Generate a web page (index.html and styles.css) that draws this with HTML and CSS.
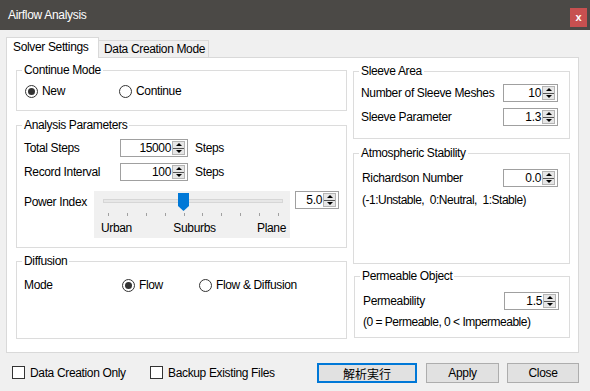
FILE: index.html
```html
<!DOCTYPE html>
<html lang="ja">
<head>
    <meta charset="utf-8">
    <title>Airflow Analysis</title>
    <link rel="stylesheet" href="styles.css">
</head>
<body>
    <div class="titlebar">
        <span class="title">Airflow Analysis</span>
        <span class="close">x</span>
    </div>

    <div class="tabs">
        <div class="tab active">Solver Settings</div>
        <div class="tab">Data Creation Mode</div>
    </div>

    <div class="page">
        <div class="col left">
            <div class="group g-continue">
                <div class="legend">Continue Mode</div>
                <div class="row radios">
                    <label class="radio w-new"><span class="dot on"></span>New</label>
                    <label class="radio"><span class="dot"></span>Continue</label>
                </div>
            </div>

            <div class="group g-analysis">
                <div class="legend">Analysis Parameters</div>
                <div class="row first">
                    <span class="lbl w-96">Total Steps</span>
                    <div class="spin w-68"><span class="val">15000</span><span class="arrows"><i class="up"></i><i class="down"></i></span></div>
                    <span class="unit">Steps</span>
                </div>
                <div class="row next">
                    <span class="lbl w-96">Record Interval</span>
                    <div class="spin w-68"><span class="val">100</span><span class="arrows"><i class="up"></i><i class="down"></i></span></div>
                    <span class="unit">Steps</span>
                </div>
                <div class="row power">
                    <span class="lbl w-70 lbl-power">Power Index</span>
                    <div class="slider">
                        <div class="track"></div>
                        <div class="thumb"></div>
                        <div class="ticks">
                            <i></i><i></i><i></i><i></i><i></i><i></i><i></i><i></i><i></i><i></i>
                        </div>
                        <div class="marks">
                            <span>Urban</span><span>Suburbs</span><span>Plane</span>
                        </div>
                    </div>
                    <div class="spin w-44"><span class="val">5.0</span><span class="arrows"><i class="up"></i><i class="down"></i></span></div>
                </div>
            </div>

            <div class="group g-diffusion">
                <div class="legend">Diffusion</div>
                <div class="row radios mode">
                    <span class="lbl w-98">Mode</span>
                    <label class="radio w-77"><span class="dot on"></span>Flow</label>
                    <label class="radio"><span class="dot"></span>Flow &amp; Diffusion</label>
                </div>
            </div>
        </div>

        <div class="col right">
            <div class="group g-sleeve">
                <div class="legend">Sleeve Area</div>
                <div class="row first-r">
                    <span class="lbl w-142">Number of Sleeve Meshes</span>
                    <div class="spin w-55"><span class="val">10</span><span class="arrows"><i class="up"></i><i class="down"></i></span></div>
                </div>
                <div class="row next">
                    <span class="lbl w-142">Sleeve Parameter</span>
                    <div class="spin w-55"><span class="val">1.3</span><span class="arrows"><i class="up"></i><i class="down"></i></span></div>
                </div>
            </div>

            <div class="group g-atmos">
                <div class="legend">Atmospheric Stability</div>
                <div class="row first-a">
                    <span class="lbl w-141">Richardson Number</span>
                    <div class="spin w-55"><span class="val">0.0</span><span class="arrows"><i class="up"></i><i class="down"></i></span></div>
                </div>
                <div class="note">(-1:Unstable,&nbsp; 0:Neutral,&nbsp; 1:Stable)</div>
            </div>

            <div class="group g-perm">
                <div class="legend">Permeable Object</div>
                <div class="row first-a">
                    <span class="lbl w-141">Permeability</span>
                    <div class="spin w-55"><span class="val">1.5</span><span class="arrows"><i class="up"></i><i class="down"></i></span></div>
                </div>
                <div class="note n-perm">(0 = Permeable, 0 &lt; Impermeable)</div>
            </div>
        </div>
    </div>

    <div class="footer">
        <label class="check w-138"><span class="box"></span>Data Creation Only</label>
        <label class="check"><span class="box"></span>Backup Existing Files</label>
        <button class="btn default">解析実行</button>
        <button class="btn apply">Apply</button>
        <button class="btn close-btn">Close</button>
    </div>
</body>
</html>
```

FILE: styles.css
```css
* {
    box-sizing: border-box;
}

body {
    margin: 0;
    width: 590px;
    height: 391px;
    overflow: hidden;
    background: #f0f0f0;
    font-family: "Liberation Sans", "Noto Sans CJK JP", sans-serif;
    font-size: 12px;
    letter-spacing: -0.35px;
    color: #000;
}

/* title bar */

.titlebar {
    display: flex;
    align-items: flex-start;
    height: 30px;
    background: #4b4946;
    color: #fff;
}

.title {
    margin: 8px 0 0 8px;
    font-size: 12px;
    letter-spacing: -0.3px;
    line-height: 15px;
}

.close {
    margin: 8px 3px 0 auto;
    width: 17px;
    height: 19px;
    background: #c75050;
    color: #fff;
    font-weight: bold;
    font-size: 11px;
    line-height: 18px;
    text-align: center;
}

/* tabs */

.tabs {
    display: flex;
    align-items: flex-end;
    height: 27px;
    padding-left: 6px;
}

.tab {
    height: 17px;
    width: 110px;
    padding-left: 5px;
    line-height: 17px;
    background: #f0f0f0;
    border: 1px solid #d9d9d9;
    border-bottom: 0;
    border-left: 0;
}

.tab.active {
    position: relative;
    z-index: 1;
    width: 93px;
    height: 21px;
    margin-bottom: -1px;
    padding-left: 6px;
    line-height: 19px;
    background: #fff;
    border-left: 1px solid #d9d9d9;
}

.page {
    display: flex;
    gap: 6px;
    margin-left: 6px;
    width: 573px;
    height: 296px;
    padding: 12px 0 0 9px;
    background: #fff;
    border: 1px solid #d9d9d9;
}

.col.left {
    width: 331px;
}

.col.right {
    width: 217px;
}

/* group boxes */

.group {
    border: 1px solid #dcdcdc;
}

.legend {
    display: table;
    margin: -8px 0 0 5px;
    padding: 0 2px;
    background: #fff;
    line-height: 14px;
}

.g-continue { height: 41px; }
.g-analysis { height: 123px; margin-top: 14px; }
.g-diffusion { height: 78px; margin-top: 13px; }
.g-sleeve { height: 68px; margin-top: 1px; }
.g-atmos { height: 111px; margin-top: 14px; }
.g-perm { height: 62px; margin-top: 12px; margin-left: 1px; }

.row {
    display: flex;
    align-items: center;
    height: 18px;
    padding-left: 7px;
}

.radios { margin-top: 7px; padding-left: 8px; height: 14px; }
.mode { margin-top: 10px; padding-left: 7px; }
.first { margin-top: 7px; }
.first-r { margin-top: 6px; padding-left: 7px; }
.first-a { margin-top: 9px; padding-left: 8px; }
.next { margin-top: 6px; }
.g-sleeve .next { padding-left: 7px; }

.lbl { flex: none; }
.w-96 { width: 96px; }
.w-70 { width: 70px; }
.w-98 { width: 98px; }
.w-142 { width: 142px; }
.w-141 { width: 141px; }

.unit { margin-left: 7px; }

/* radios and checks */

.radio, .check {
    display: flex;
    align-items: center;
    gap: 4px;
    flex: none;
}

.w-new { width: 94px; }
.w-77 { width: 77px; }

.dot {
    width: 13px;
    height: 13px;
    border: 1px solid #333;
    border-radius: 50%;
    background: #fff;
    display: flex;
    align-items: center;
    justify-content: center;
}

.dot.on::after {
    content: "";
    width: 7px;
    height: 7px;
    border-radius: 50%;
    background: #333;
}

/* spin boxes */

.spin {
    display: flex;
    align-items: center;
    height: 18px;
    border: 1px solid #a0a0a0;
    background: #fff;
    flex: none;
}

.w-68 { width: 68px; }
.w-55 { width: 55px; }
.w-44 { width: 44px; }

.val {
    flex: 1;
    text-align: right;
    padding-right: 1px;
    line-height: 14px;
}

.arrows {
    display: flex;
    flex-direction: column;
    width: 13px;
    height: 14px;
    margin-right: 2px;
    border: 1px solid #b4b4b4;
    background: #e6e6e6;
}

.arrows i {
    flex: 1;
    display: flex;
    align-items: center;
    justify-content: center;
}

.arrows .down {
    border-top: 1px solid #555;
}

.arrows .up::after {
    content: "";
    border-left: 3px solid transparent;
    border-right: 3px solid transparent;
    border-bottom: 3px solid #000;
}

.arrows .down::after {
    content: "";
    border-left: 3px solid transparent;
    border-right: 3px solid transparent;
    border-top: 3px solid #000;
}

/* slider */

.power {
    align-items: flex-start;
    height: 47px;
    margin-top: 10px;
}

.lbl-power {
    margin-top: 4px;
}

.slider {
    position: relative;
    width: 196px;
    height: 47px;
    background: #f0f0f0;
    flex: none;
}

.track {
    width: 180px;
    height: 4px;
    margin: 8px 0 0 9px;
    background: #e7e7e7;
    border: 1px solid #d6d6d6;
}

.thumb {
    position: absolute;
    left: 84px;
    top: 2px;
    width: 11px;
    height: 18px;
    background: #0078d7;
    clip-path: polygon(0 0, 100% 0, 100% 72%, 50% 100%, 0 72%);
}

.ticks {
    display: flex;
    justify-content: space-between;
    width: 171px;
    margin: 10px 0 0 14px;
    height: 3px;
}

.ticks i {
    width: 1px;
    height: 3px;
    background: #a0a0a0;
}

.marks {
    display: flex;
    justify-content: space-between;
    width: 185px;
    margin: 5px 0 0 7px;
    line-height: 14px;
}

.power .spin {
    margin-left: 5px;
}

.note {
    margin: 6px 0 0 8px;
    line-height: 14px;
    letter-spacing: -0.5px;
}

.n-perm {
    margin-top: 5px;
}

/* footer */

.footer {
    display: flex;
    align-items: center;
    height: 38px;
    padding: 1px 11px 0 12px;
}

.w-138 { width: 138px; }

.check {
    gap: 5px;
}

.box {
    width: 13px;
    height: 13px;
    border: 1px solid #333;
    background: #fff;
}

.btn {
    height: 20px;
    padding: 0;
    background: #e1e1e1;
    border: 1px solid #adadad;
    font-family: "Liberation Sans", "Noto Sans CJK JP", sans-serif;
    font-size: 12px;
    letter-spacing: -0.35px;
    color: #000;
}

.btn.default {
    margin-left: auto;
    width: 100px;
    border: 2px solid #0078d7;
    letter-spacing: 0;
}

.btn.apply {
    width: 73px;
    margin-left: 9px;
}

.btn.close-btn {
    width: 72px;
    margin-left: 8px;
}
```
